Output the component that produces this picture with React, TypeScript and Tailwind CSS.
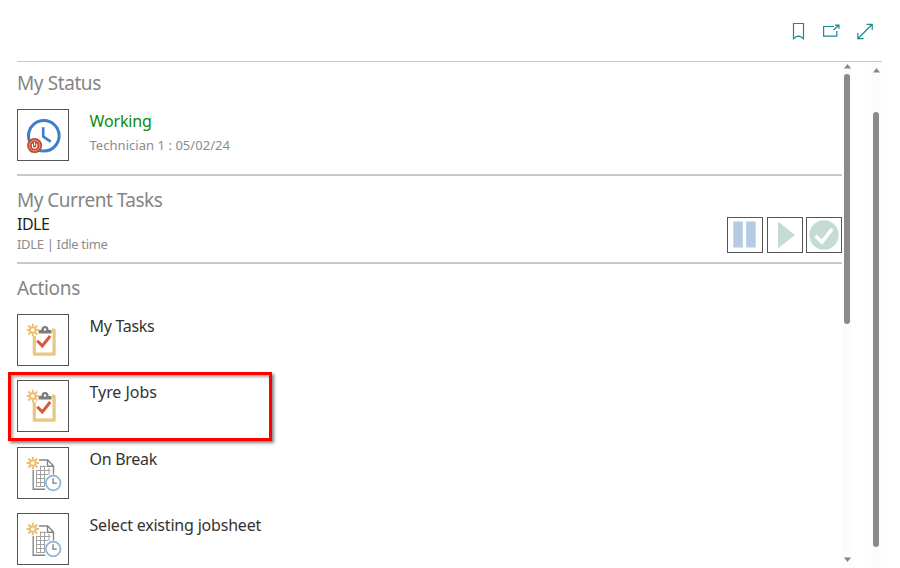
import type { ReactNode } from "react";

function IconBox({ children }: { children: ReactNode }) {
  return (
    <div className="h-[52px] w-[52px] shrink-0 border border-[#555] bg-white">
      <svg viewBox="1 1 50 50" className="block h-full w-full" fill="none">
        {children}
      </svg>
    </div>
  );
}

function Sun() {
  return (
    <g stroke="#efbe6c" strokeWidth="1.9">
      <circle cx="15.8" cy="16" r="2.8" />
      <path d="M15.8 9.800v3M15.800 19.200v3M9.800 16h3M19 16h3M11.300 11.500l2.300 2.300M18 18.200l2.300 2.300M20.300 11.500L18 13.800M13.600 18.200l-2.300 2.300" />
    </g>
  );
}

function StatusIcon() {
  return (
    <IconBox>
      <circle cx="26.8" cy="26.8" r="15.3" stroke="#3d7dcc" strokeWidth="3" />
      <path d="M26.2 18.2v9.400l7.600 5" stroke="#3d7dcc" strokeWidth="2.600" />
      <circle cx="17.6" cy="36.6" r="7.500" fill="#c7492c" />
      <circle cx="17.6" cy="36.6" r="5.300" stroke="#eab9ab" strokeWidth="0.800" />
      <path d="M15.400 34.800v2.100a2.200 2.200 0 0 0 4.400 0v-2.100M17.600 33v3.400" stroke="#fff" strokeWidth="1.100" />
    </IconBox>
  );
}

function ClipboardIcon() {
  return (
    <IconBox>
      <path d="M17.300 22v18.200h19.800V16H35" stroke="#ecc67c" strokeWidth="3.200" strokeLinejoin="round" />
      <path
        fillRule="evenodd"
        d="M21.600 19.500v-3.500h2.700c.2-2.400 1.400-3.900 3.700-3.900s3.500 1.500 3.700 3.900h2.800v3.500zM26.800 15.500a1.200 1.200 0 1 0 2.400 0 1.200 1.200 0 1 0-2.400 0z"
        fill="#7d7d7d"
      />
      <path d="M20.200 26.700l5.100 5.200 7.900-9.900" stroke="#d8583c" strokeWidth="3" />
      <Sun />
    </IconBox>
  );
}

function SheetIcon() {
  return (
    <IconBox>
      <path d="M16.200 23v19.300h12M22 13h8.800l5.700 6v8.500M30.500 13v6.300h6" stroke="#858585" strokeWidth="1.400" />
      <path
        d="M19 23.500h14.500M19 27.500h12M19 31.500h9.500M19 35.500h8.500M19 39.500h9M19.500 23v17M23.500 18.500V40M27.500 18.500V40M32 21v7M23 19.500h6"
        stroke="#a2a2a2"
        strokeWidth="1"
      />
      <Sun />
      <circle cx="36.200" cy="36" r="7.300" fill="#fff" stroke="#8fb2da" strokeWidth="1.700" />
      <path d="M36 31.200v4.900h3.800" stroke="#777" strokeWidth="1.300" />
    </IconBox>
  );
}

function TaskButton({ children }: { children: ReactNode }) {
  return (
    <div className="h-9 w-9 border border-[#555] bg-white">
      <svg viewBox="1 1 34 34" className="block h-full w-full" fill="none">
        {children}
      </svg>
    </div>
  );
}

function Action({ icon, label, spacing }: { icon: ReactNode; label: string; spacing: string }) {
  return (
    <div className="flex h-[66.400px] shrink-0 items-start gap-[20.500px]">
      {icon}
      <span className={`text-[16px] leading-6 text-[#333] ${spacing}`}>{label}</span>
    </div>
  );
}

function Arrow({ down = false }: { down?: boolean }) {
  return (
    <svg viewBox="0 0 7 5" className="h-[5px] w-[7px] shrink-0">
      <path d={down ? "M0 .5h7L3.500 5z" : "M0 4.500h7L3.500 0z"} fill="#858585" />
    </svg>
  );
}

export default function App() {
  return (
    <div className="relative flex h-[568px] w-[900px] flex-col overflow-hidden bg-white pl-[17px] font-['Noto_Sans','Open_Sans',sans-serif] whitespace-nowrap">
      <header className="flex h-[62px] w-[865px] shrink-0 items-start justify-end border-b border-[#c8c8cc] pt-[22px] pr-[9.500px]">
        <svg viewBox="0 0 82 18" className="h-[18px] w-[82px]" fill="none" stroke="#198a90" strokeWidth="1.200">
          <path d="M2.500 1.500h10v15.300l-2.700-2.200H9l-1.500-.7-1.500.7h-.8l-2.700 2.200z" />
          <path d="M43 4.500H32.600v9.700h13.200V9M42.500 8l5-4.500M44 3.200h3.900v3.600" />
          <path d="M67 16.500L81 2.500M75.500 2.300h5.700V8M66.800 11v5.700h5.700" />
        </svg>
      </header>

      <div className="flex min-h-0 flex-1">
        <main className="flex w-[825px] shrink-0 flex-col">
          <section className="h-[114px] shrink-0 border-b-2 border-[#c9c9c9] pt-[7px]">
            <h2 className="text-[19px] leading-7 tracking-[-0.400px] text-[#858585]">My Status</h2>
            <div className="mt-3 flex gap-[20.500px]">
              <StatusIcon />
              <div>
                <p className="text-[16px] leading-6 tracking-[-0.150px] text-[#0c8a0c]">Working</p>
                <p className="text-[13px] leading-[25px] tracking-[0.040px] text-[#8c8c8c]">Technician 1 : 05/02/24</p>
              </div>
            </div>
          </section>

          <section className="h-[88px] shrink-0 border-b-2 border-[#c9c9c9] pt-[10px]">
            <h2 className="text-[19px] leading-7 tracking-[-0.500px] text-[#858585]">My Current Tasks</h2>
            <div className="flex justify-between">
              <div>
                <p className="text-[16px] leading-5 tracking-[-0.500px] text-[#222]">IDLE</p>
                <p className="text-[13px] leading-5 tracking-[-0.330px] text-[#8c8c8c]">IDLE | Idle time</p>
              </div>
              <div className="mt-[3px] flex gap-[3.500px]">
                <TaskButton>
                  <path d="M6.300 4.500h9.500v26H6.300zM19.200 4.500h9.500v26h-9.500z" fill="#b5cbe4" />
                </TaskButton>
                <TaskButton>
                  <path d="M11 4.500L28 18 11 31.500z" fill="#c5dcd4" />
                </TaskButton>
                <TaskButton>
                  <circle cx="18" cy="18" r="14.700" fill="#c5dcd4" />
                  <path d="M9.500 19l6.500 6 10-13" stroke="#fff" strokeWidth="3.600" />
                </TaskButton>
              </div>
            </div>
          </section>

          <section className="flex flex-1 flex-col pt-[10px]">
            <h2 className="text-[19px] leading-7 tracking-[-0.350px] text-[#858585]">Actions</h2>
            <div className="mt-3">
              <Action icon={<ClipboardIcon />} label="My Tasks" spacing="tracking-[-0.300px]" />
              <Action icon={<ClipboardIcon />} label="Tyre Jobs" spacing="tracking-[-0.050px]" />
              <Action icon={<SheetIcon />} label="On Break" spacing="tracking-[-0.300px]" />
              <Action icon={<SheetIcon />} label="Select existing jobsheet" spacing="tracking-[-0.200px]" />
            </div>
          </section>
        </main>

        <div className="flex w-[10px] flex-col items-center bg-[#fcfcfc] pt-[2px]">
          <Arrow />
          <div className="mt-[5px] h-[250px] w-[6px] shrink-0 rounded-full bg-[#8a8a8a]" />
          <div className="mt-[233px] flex">
            <Arrow down />
          </div>
        </div>
        <div className="ml-[19px] flex w-[10px] flex-col items-center bg-[#fcfcfc] pt-[6px]">
          <Arrow />
          <div className="mt-[39px] h-[435px] w-[6px] shrink-0 rounded-full bg-[#8a8a8a]" />
        </div>
      </div>

      <div className="absolute top-[372px] left-[8px] h-[69px] w-[264px] border-[3px] border-[#fe0000] shadow-[2px_2px_3px_rgba(0,0,0,0.5),inset_2px_2px_3px_rgba(0,0,0,0.350)]" />
    </div>
  );
}
